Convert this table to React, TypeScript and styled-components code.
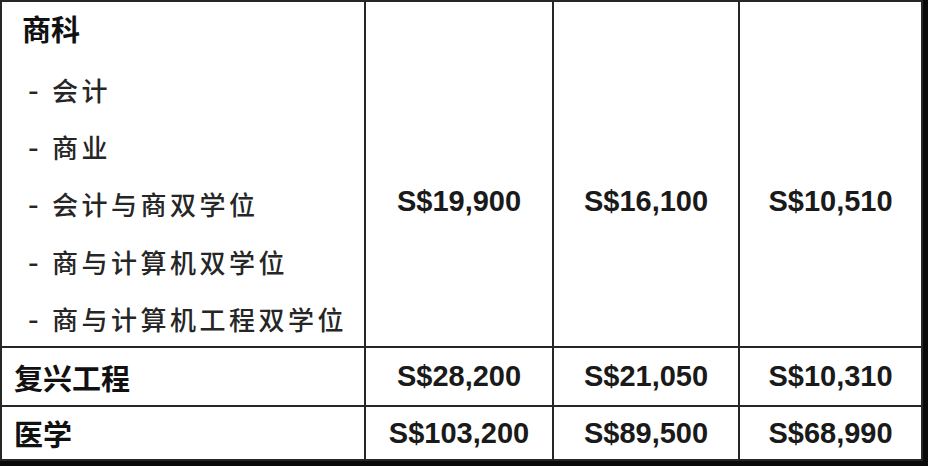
import styled, { createGlobalStyle } from 'styled-components';

const GlobalStyle = createGlobalStyle`
  html, body {
    margin: 0;
    padding: 0;
    background: #ffffff;
  }
  body {
    width: 928px;
    height: 466px;
    overflow: hidden;
  }
`;

const fees = [
  { name: '复兴工程', values: ['S$28,200', 'S$21,050', 'S$10,310'] },
  { name: '医学', values: ['S$103,200', 'S$89,500', 'S$68,990'] },
];

const businessItems = [
  '会计',
  '商业',
  '会计与商双学位',
  '商与计算机双学位',
  '商与计算机工程双学位',
];

const businessFees = ['S$19,900', 'S$16,100', 'S$10,510'];

const App = () => {
  return (
    <>
      <GlobalStyle />
      <Frame>
        <FeeTable>
          <NameCell>
            <GroupTitle>商科</GroupTitle>
            {businessItems.map((item) => (
              <SubItem key={item}>
                <Dash>-</Dash>
                {item}
              </SubItem>
            ))}
          </NameCell>
          {businessFees.map((fee) => (
            <PriceCell key={fee} $offset={55}>
              {fee}
            </PriceCell>
          ))}
          {fees.map((row) => (
            <Row key={row.name} {...row} />
          ))}
        </FeeTable>
      </Frame>
    </>
  );
};

const Row = ({ name, values }: { name: string; values: string[] }) => (
  <>
    <NameCell>
      <RowTitle>{name}</RowTitle>
    </NameCell>
    {values.map((v) => (
      <PriceCell key={v}>{v}</PriceCell>
    ))}
  </>
);

const Frame = styled.div`
  width: 928px;
  height: 466px;
  box-sizing: border-box;
  border-right: 5px solid #0a0a0a;
  border-bottom: 5px solid #0a0a0a;
`;

const FeeTable = styled.div`
  display: grid;
  grid-template-columns: 362px 186px 184px 181px;
  grid-template-rows: 344px 57px 52px;
  gap: 2px;
  padding: 2px;
  width: 923px;
  box-sizing: border-box;
  background: #262626;
`;

const NameCell = styled.div`
  background: #ffffff;
  display: flex;
  flex-direction: column;
  justify-content: center;
  font-family: 'Noto Sans CJK SC', 'Liberation Sans', sans-serif;
  overflow: visible;
  min-width: 0;
`;

const GroupTitle = styled.div`
  font-size: 29px;
  font-weight: 700;
  line-height: 58px;
  height: 58px;
  margin-top: -2px;
  margin-bottom: 4px;
  padding-left: 20px;
  color: #111;
  align-self: stretch;
`;

const SubItem = styled.div`
  font-size: 26px;
  font-weight: 500;
  line-height: 57.4px;
  height: 57.4px;
  letter-spacing: 3.5px;
  padding-left: 26px;
  color: #262626;
  white-space: nowrap;
`;

const Dash = styled.span`
  display: inline-block;
  width: 24px;
  letter-spacing: 0;
  font-family: 'Liberation Sans', Arial, sans-serif;
  font-size: 32px;
  font-weight: 400;
`;

const RowTitle = styled.div`
  font-size: 29px;
  font-weight: 700;
  padding-left: 12px;
  color: #111;
`;

const PriceCell = styled.div<{ $offset?: number }>`
  background: #ffffff;
  display: flex;
  align-items: center;
  justify-content: center;
  padding-top: ${(p) => p.$offset ?? 0}px;
  font-family: 'Liberation Sans', Arial, sans-serif;
  font-size: 29px;
  font-weight: 700;
  color: #1a1a1a;
`;

export default App;
